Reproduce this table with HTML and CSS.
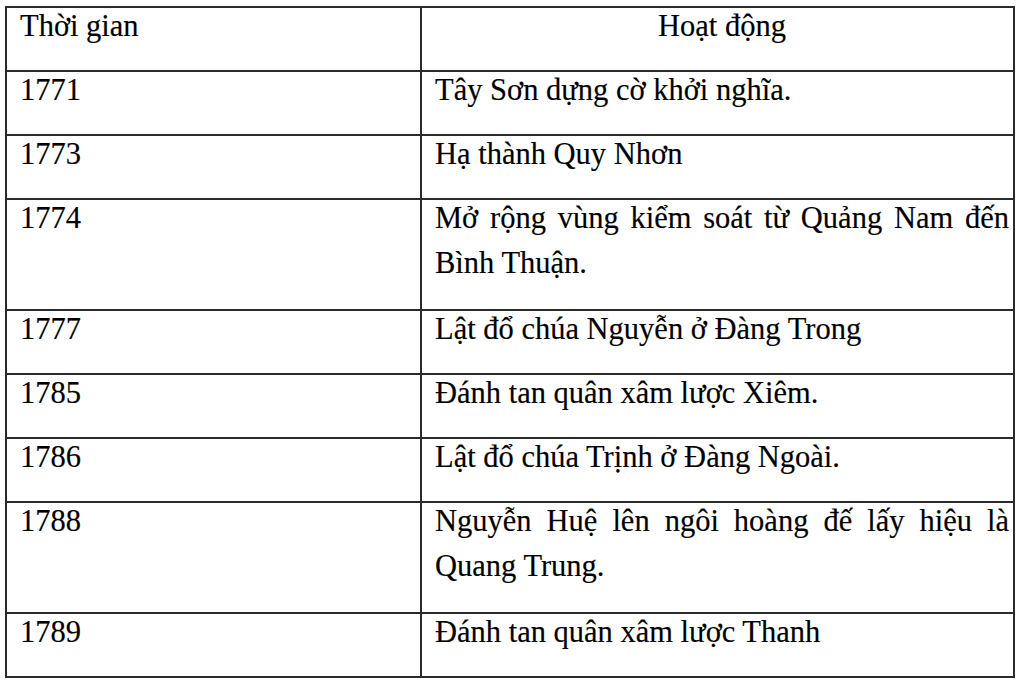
FILE: index.html
```html
<!DOCTYPE html>
<html lang="vi">
<head>
<meta charset="utf-8">
<link rel="stylesheet" href="styles.css">
</head>
<body>
<table class="timeline">
  <tr class="row single">
    <td class="col-time"><div class="txt">Thời gian</div></td>
    <td class="col-act head"><div class="txt">Hoạt động</div></td>
  </tr>
  <tr class="row single">
    <td class="col-time"><div class="txt">1771</div></td>
    <td class="col-act"><div class="txt">Tây Sơn dựng cờ khởi nghĩa.</div></td>
  </tr>
  <tr class="row single">
    <td class="col-time"><div class="txt">1773</div></td>
    <td class="col-act"><div class="txt">Hạ thành Quy Nhơn</div></td>
  </tr>
  <tr class="row double">
    <td class="col-time"><div class="txt">1774</div></td>
    <td class="col-act"><div class="txt">Mở rộng vùng kiểm soát từ Quảng Nam đến Bình Thuận.</div></td>
  </tr>
  <tr class="row single">
    <td class="col-time"><div class="txt">1777</div></td>
    <td class="col-act"><div class="txt">Lật đổ chúa Nguyễn ở Đàng Trong</div></td>
  </tr>
  <tr class="row single">
    <td class="col-time"><div class="txt">1785</div></td>
    <td class="col-act"><div class="txt">Đánh tan quân xâm lược Xiêm.</div></td>
  </tr>
  <tr class="row single">
    <td class="col-time"><div class="txt">1786</div></td>
    <td class="col-act"><div class="txt">Lật đổ chúa Trịnh ở Đàng Ngoài.</div></td>
  </tr>
  <tr class="row double">
    <td class="col-time"><div class="txt">1788</div></td>
    <td class="col-act"><div class="txt">Nguyễn Huệ lên ngôi hoàng đế lấy hiệu là Quang Trung.</div></td>
  </tr>
  <tr class="row single">
    <td class="col-time"><div class="txt">1789</div></td>
    <td class="col-act"><div class="txt">Đánh tan quân xâm lược Thanh</div></td>
  </tr>
</table>
</body>
</html>
```
FILE: styles.css
```css
html, body {
  margin: 0;
  padding: 0;
  background: #fff;
}
body {
  padding: 6px 0 0 5px;
  font-family: "Liberation Serif", "Times New Roman", serif;
  font-size: 30.5px;
  color: #000;
}
.timeline {
  border-collapse: collapse;
  width: 1010px;
  table-layout: fixed;
}
.timeline td {
  border: 2px solid #2b2b2b;
  vertical-align: top;
  padding: 0 4px 0 13px;
  line-height: 45px;
}
.col-time {
  width: 396px;
}
.col-act {
  text-align: justify;
}
.col-act.head {
  text-align: center;
}
.txt {
  margin-top: -4px;
  -webkit-text-stroke: 0.15px #000;
}
.row.single {
  height: 64px;
}
.row.double {
  height: 111px;
}
```
